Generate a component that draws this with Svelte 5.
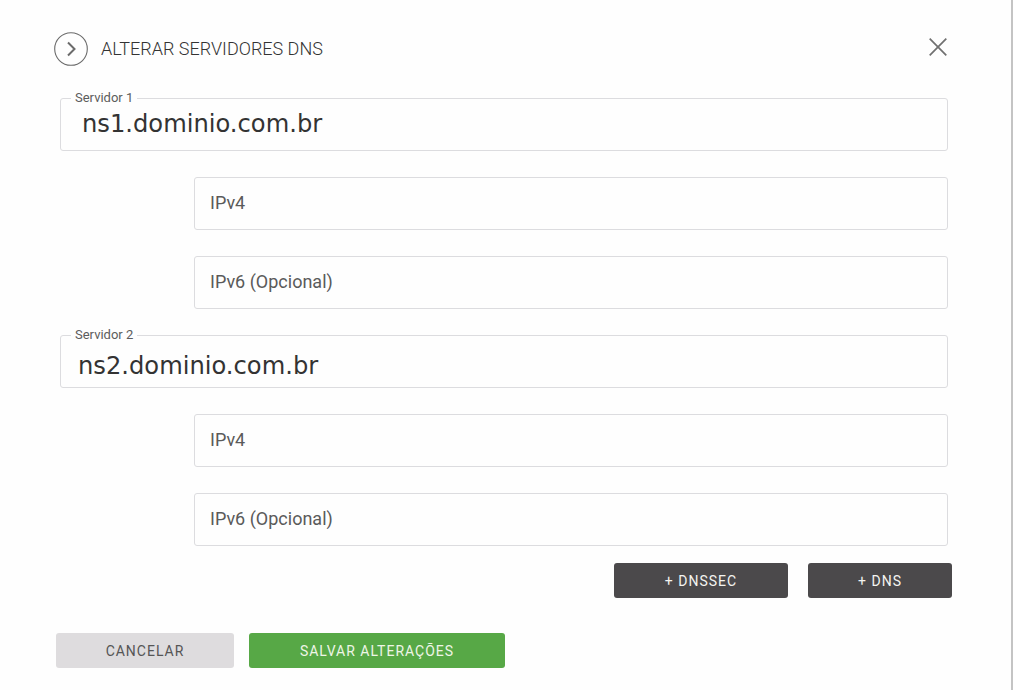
<script lang="ts">
	type Server = { label: string; host: string; indent: string };

	const servers: Server[] = [
		{ label: 'Servidor 1', host: 'ns1.dominio.com.br', indent: 'wide' },
		{ label: 'Servidor 2', host: 'ns2.dominio.com.br', indent: 'narrow' }
	];
</script>

<div class="modal">
	<header class="head">
		<span class="round">
			<svg width="34" height="34" viewBox="0 0 34 34" fill="none">
				<circle cx="17" cy="17" r="16.3" stroke="#6b6b6b" stroke-width="1.1" />
				<path d="M14 10.5 L20.5 17 L14 23.5" stroke="#6b6b6b" stroke-width="2" />
			</svg>
		</span>
		<h1>ALTERAR SERVIDORES DNS</h1>
		<button class="close" aria-label="Fechar">
			<svg width="18" height="18" viewBox="0 0 18 18" fill="none">
				<path d="M0.7 0.7 L17.3 17.3 M17.3 0.7 L0.7 17.3" stroke="#707070" stroke-width="1.7" />
			</svg>
		</button>
	</header>

	<form class="servers">
		{#each servers as s}
			<div class="host">
				<span class="legend">{s.label}</span>
				<input class="host-input {s.indent}" type="text" value={s.host} />
			</div>
			<input class="ip" type="text" placeholder="IPv4" />
			<input class="ip" type="text" placeholder="IPv6 (Opcional)" />
		{/each}
	</form>

	<div class="extra">
		<button class="dark dnssec">+ DNSSEC</button>
		<button class="dark dns">+ DNS</button>
	</div>

	<div class="actions">
		<button class="cancel">CANCELAR</button>
		<button class="save">SALVAR ALTERAÇÕES</button>
	</div>
</div>

<style>
	:global(body) {
		background: #fff;
		font-family: Roboto, "Liberation Sans", sans-serif;
	}

	.modal {
		box-sizing: border-box;
		width: 1013px;
		height: 690px;
		overflow: hidden;
		padding: 32px 0 0 54px;
		background: #fefefe;
		border-right: 2px solid #c4c4c4;
	}

	.head {
		display: flex;
		align-items: center;
		height: 34px;
		width: 894px;
	}

	.round {
		display: flex;
		width: 34px;
		height: 34px;
	}

	.head h1 {
		flex: 1;
		margin: 0 0 2px 13px;
		font-size: 18px;
		font-weight: 300;
		color: #333;
	}

	.close {
		display: flex;
		padding: 0;
		margin: -4px 1px 0 0;
		border: none;
		background: none;
	}

	.servers {
		display: flex;
		flex-direction: column;
		align-items: flex-end;
		gap: 26px;
		width: 894px;
		margin-top: 32px;
	}

	.host {
		position: relative;
		width: 888px;
		height: 53px;
	}

	.legend {
		position: absolute;
		top: -8px;
		left: 11px;
		padding: 0 4px;
		background: #fefefe;
		font-size: 13px;
		line-height: 15px;
		color: #5c5c5c;
	}

	input {
		box-sizing: border-box;
		display: block;
		border: 1px solid #dcdcdf;
		border-radius: 3px;
		background: #fefefe;
		outline: none;
		font-family: inherit;
	}

	.host-input {
		width: 100%;
		height: 100%;
		font-family: "DejaVu Sans", sans-serif;
		font-size: 24.2px;
		color: #333;
	}

	.host-input.wide {
		padding: 0 0 1px 21px;
	}

	.host-input.narrow {
		padding: 9px 0 0 17px;
	}

	.ip {
		width: 754px;
		height: 53px;
		padding: 0 15px 2px;
		font-size: 18px;
		color: #555;
	}

	.ip::placeholder {
		color: #5a5a5a;
		opacity: 1;
	}

	button {
		font-family: inherit;
		cursor: pointer;
	}

	.extra {
		display: flex;
		justify-content: flex-end;
		gap: 20px;
		width: 898px;
		margin-top: 17px;
	}

	.dark,
	.cancel,
	.save {
		height: 35px;
		border: none;
		border-radius: 3px;
		font-size: 14px;
		letter-spacing: 1px;
	}

	.dark {
		background: #4b494b;
		color: #f4f4f0;
	}

	.dnssec {
		width: 174px;
	}

	.dns {
		width: 144px;
	}

	.actions {
		display: flex;
		gap: 15px;
		margin-top: 35px;
		margin-left: 2px;
	}

	.cancel {
		width: 178px;
		background: #dedcde;
		color: #555;
	}

	.save {
		width: 256px;
		background: #57a846;
		color: #eef5e6;
	}
</style>
